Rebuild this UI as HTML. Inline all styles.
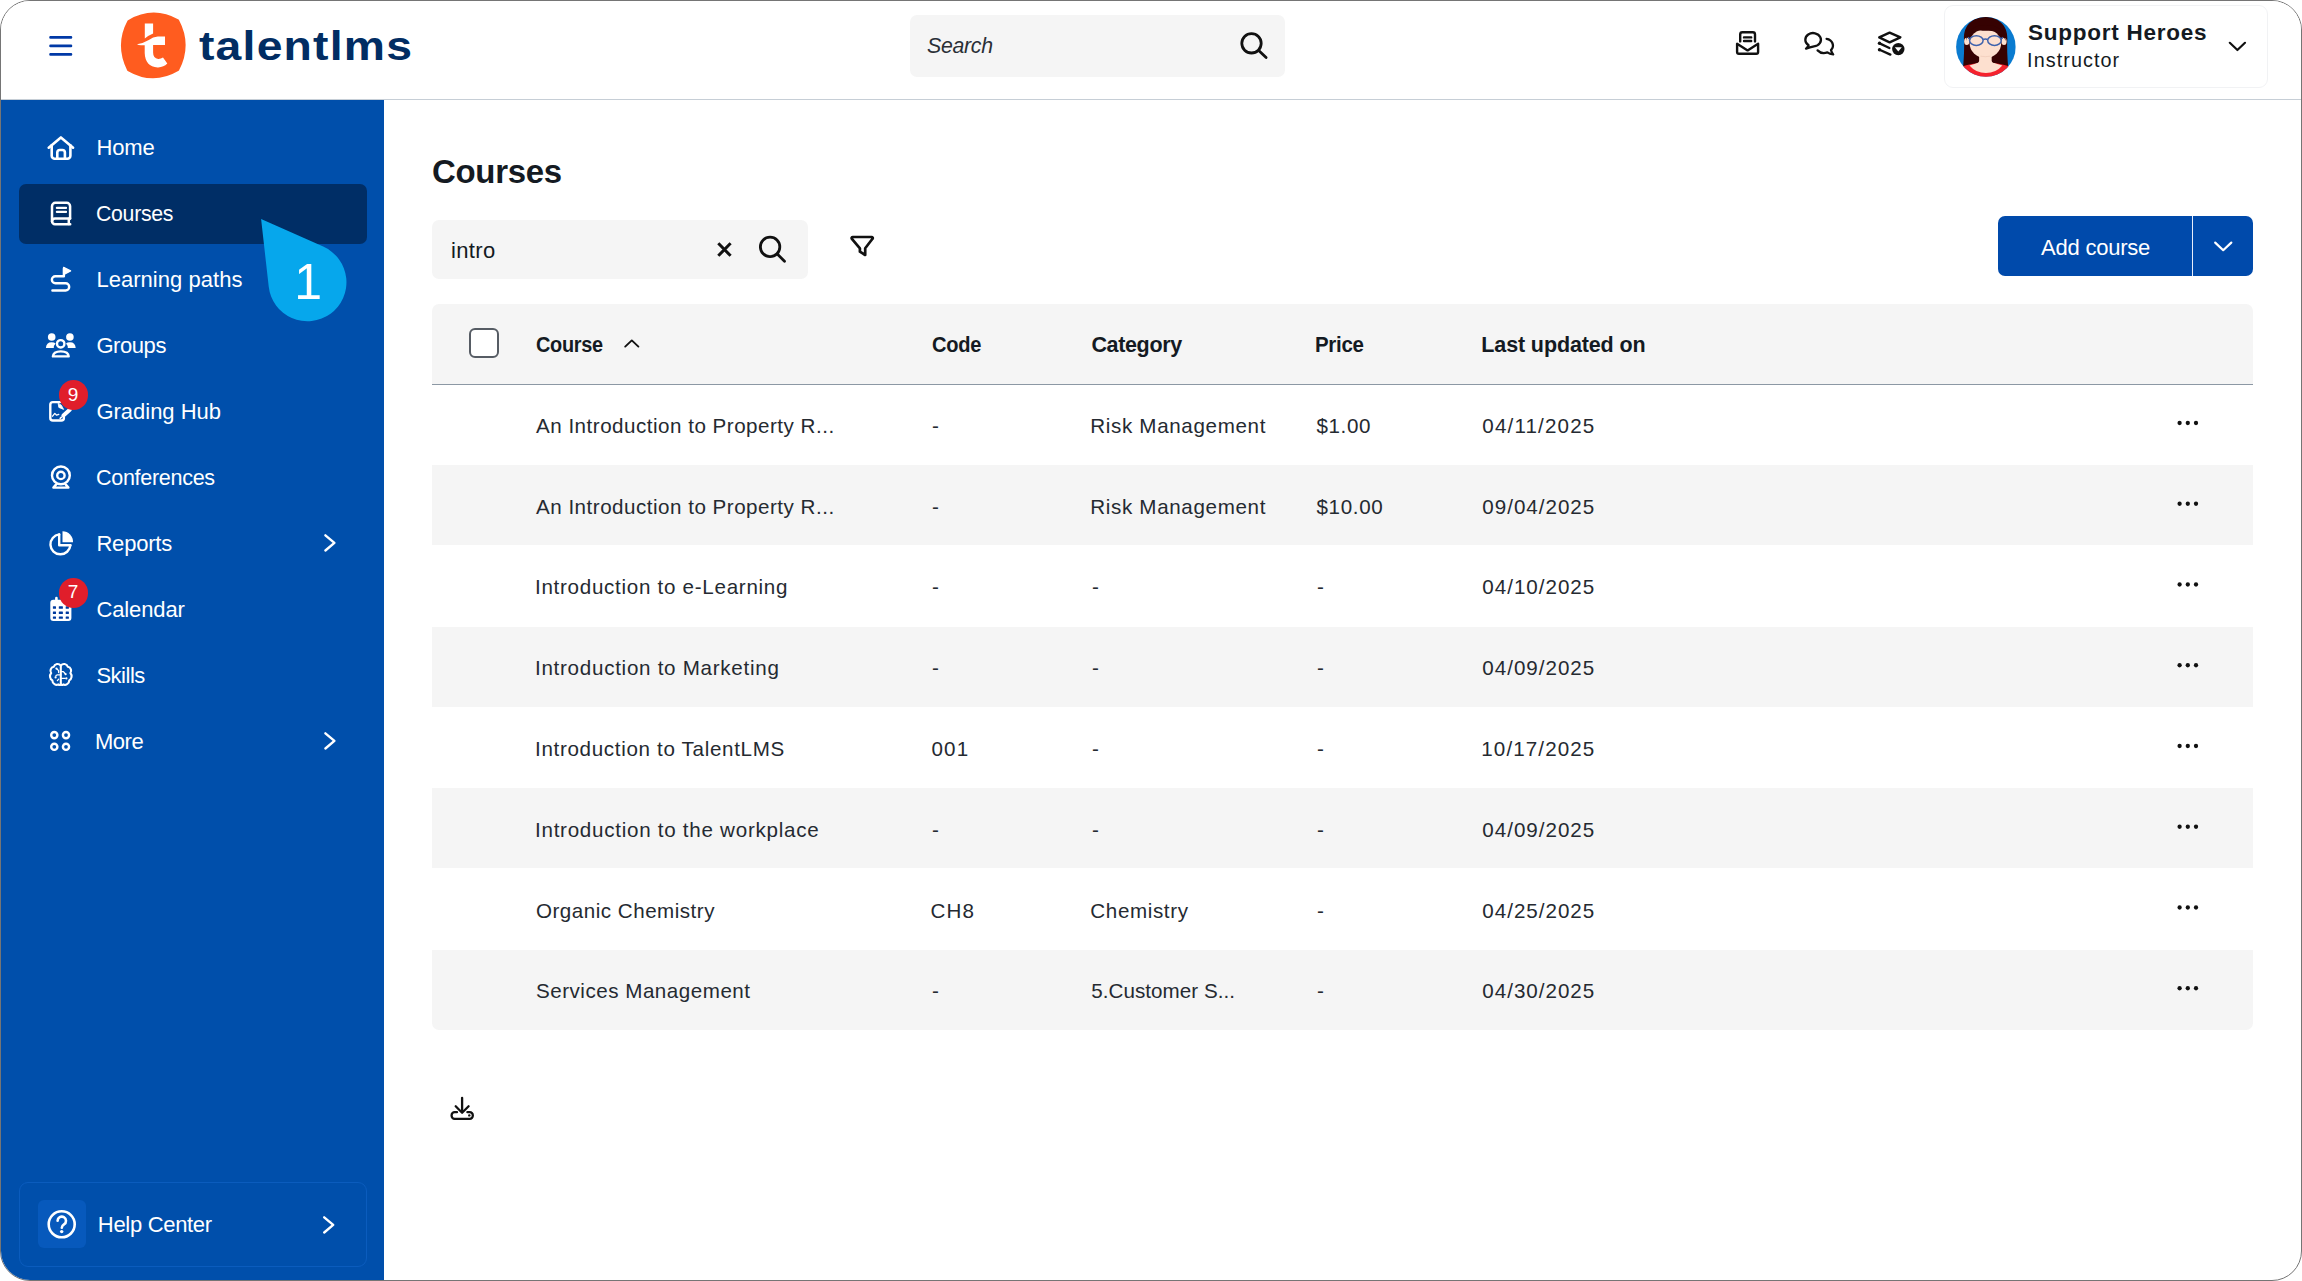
<!DOCTYPE html>
<html lang="en"><head><meta charset="utf-8"><title>Courses | TalentLMS</title>
<style>
html,body{margin:0;padding:0;background:#fff;}
body{width:2302px;height:1281px;overflow:hidden;position:relative;font-family:"Liberation Sans",sans-serif;color:#252a31;}
.frame{position:absolute;left:0;top:0;width:2300px;height:1279px;border:1px solid #757575;border-radius:30px;overflow:hidden;background:#fff;}
.page{position:absolute;left:-1px;top:-1px;width:2302px;height:1281px;}
.abs,.t,.i{position:absolute;}
.t{white-space:nowrap;line-height:1;color:#252a31;margin:0;padding:0;border:0;background:none;font-family:inherit;font-weight:400;text-decoration:none;display:block;}
.i{overflow:visible;}
header{position:absolute;left:0;top:0;width:2302px;height:99px;border-bottom:1px solid #c6ced6;background:#fff;}
nav{position:absolute;left:0;top:100px;width:384px;height:1181px;background:#004fab;}
.active{left:19px;top:184px;width:347.6px;height:59.6px;border-radius:7px;background:#002e66;}
.help{left:19px;top:1182px;width:345.6px;height:83.2px;border:1px solid #0b5cbd;border-radius:9px;}
.helpic{left:38px;top:1200.3px;width:47.8px;height:48px;border-radius:6px;background:#0759bc;}
.badge{width:29.6px;height:29.6px;border-radius:50%;background:#e01e2b;}
.hsearch{left:910.3px;top:15.1px;width:375px;height:62px;border-radius:7px;background:#f5f5f5;}
.user{left:1943.7px;top:4.7px;width:322.3px;height:81px;border:1px solid #f1f2f4;border-radius:9px;}
.tsearch{left:432.4px;top:219.6px;width:375.9px;height:59.9px;border-radius:7px;background:#f5f5f5;}
.btn{left:1997.8px;top:216px;width:255.2px;height:60px;border-radius:7px;background:#004aab;}
.btnsep{left:2191.6px;top:216px;width:1.6px;height:60px;background:#e8eefb;}
.thead{left:432.4px;top:303.6px;width:1820.6px;height:80.4px;border-radius:7px 7px 0 0;background:#f5f5f5;border-bottom:1.5px solid #8c98a4;}
.row{left:432.4px;width:1820.6px;height:80.2px;background:#f5f5f5;}
.cb{left:469.4px;top:328px;width:26px;height:26px;border:2px solid #565c64;border-radius:6px;background:#fff;}
</style></head>
<body>
<div class="frame"><div class="page">
<header></header><nav></nav>
<div class="abs active"></div><div class="abs help"></div><div class="abs helpic"></div>
<div class="abs hsearch"></div><div class="abs user"></div><div class="abs tsearch"></div>
<div class="abs btn"></div><div class="abs btnsep"></div><div class="abs thead"></div><div class="abs cb"></div>
<div class="abs row" style="top:465.25px"></div>
<div class="abs row" style="top:626.75px"></div>
<div class="abs row" style="top:788.25px"></div>
<div class="abs row" style="top:949.75px;border-radius:0 0 7px 7px"></div>
<svg class="i" style="left:44px;top:30px" width="34" height="32" viewBox="44 30 34 32" ><path d="M50.5,37.4H71M50.5,45.9H71M50.5,54.4H71" fill="none" stroke="#0039a6" stroke-width="2.6" stroke-linecap="round"/></svg>
<svg class="i" style="left:116px;top:8px" width="76" height="76" viewBox="116 8 76 76" ><path d="M127.6,20.2Q153.2,5.2 178.9,19.6Q192.4,45 179,70.6Q153.2,85.8 127.2,70.8Q114.2,45 127.6,20.2Z" fill="#ff5c1f" stroke="#ff5c1f" stroke-width="2.4" stroke-linejoin="round" transform="translate(153.25 45.45) scale(.962 .965) translate(-153.2 -45.4)"/>
<path d="M144.8,23.4H153.1V33.6Q148.5,35.6 144.8,38.4Z" fill="#fff"/>
<path d="M137,44.2Q143.5,43.4 148.8,40.1Q153,37 157.8,36.6H165V45.1H153.1V52.5Q153.1,58.4 158.2,58.9Q160.8,59 163,57.6L167.3,63.6Q163.5,67.6 157.6,67.4Q145.2,66.6 144.7,53V45.2H141Q138.5,45 137,44.2Z" fill="#fff"/></svg>
<svg class="i" style="left:44px;top:132px" width="34" height="32" viewBox="44 132 34 32" ><g fill="none" stroke="#fff" stroke-linecap="round" stroke-linejoin="round" stroke-width="2.6"><path d="M48.7,147.7L60.9,137.4L73.1,147.7"/><path d="M51.7,145.2V155.8a3,3 0 0 0 3,3H67.4a3,3 0 0 0 3,-3V145.2"/><path d="M57.3,158.6V152.6a2.6,2.6 0 0 1 2.6,-2.6h2.4a2.6,2.6 0 0 1 2.6,2.6V158.6"/></g></svg>
<svg class="i" style="left:46px;top:198px" width="30" height="32" viewBox="46 198 30 32" ><g fill="none" stroke="#fff" stroke-linecap="round" stroke-linejoin="round" stroke-width="2.5"><path d="M70.1,218.6V206.2a3.4,3.4 0 0 0 -3.4,-3.4H55.4a3.4,3.4 0 0 0 -3.4,3.4V221.6"/><path d="M70.1,218.6H54.9a2.8,2.8 0 0 0 0,5.6H70.2"/><path d="M68.8,218.8V224"/><path d="M56.9,207.9H66M56.9,211.9H66" stroke-width="2.3"/></g></svg>
<svg class="i" style="left:46px;top:262px" width="30" height="34" viewBox="46 262 30 34" ><g fill="none" stroke="#fff" stroke-linecap="round" stroke-linejoin="round" stroke-width="2.4"><path d="M63.9,268.5V276.2H55.4a3.55,3.55 0 0 0 0,7.1H65.6a3.6,3.6 0 0 1 0,7.2H52.4"/><path d="M63.6,267.4L70.6,270.9L64.4,274.2Z" fill="#fff" stroke-width="1.2"/></g></svg>
<svg class="i" style="left:42px;top:330px" width="38" height="30" viewBox="42 330 38 30" ><g fill="#fff"><circle cx="51.7" cy="337" r="3.8"/><circle cx="69.9" cy="337" r="3.8"/>
<path d="M45.9,347.9Q46.3,342.2 51.6,342.2Q54.4,342.2 55.6,343.4Q53.6,345.4 53.8,347.9Z"/>
<path d="M75.7,347.9Q75.3,342.2 70,342.2Q67.2,342.2 66,343.4Q68,345.4 67.8,347.9Z"/></g>
<g fill="none" stroke="#fff" stroke-width="2.4" stroke-linejoin="round"><circle cx="60.7" cy="343.8" r="3.7"/><path d="M52.9,356.4Q53.3,351.4 60.8,351.4Q68.3,351.4 68.7,356.4Z"/></g></svg>
<svg class="i" style="left:44px;top:396px" width="34" height="30" viewBox="44 396 34 30" ><g fill="none" stroke="#fff" stroke-linecap="round" stroke-linejoin="round" stroke-width="2.4"><path d="M63.9,417.4V417.9a2.6,2.6 0 0 1 -2.6,2.6H52.9a2.6,2.6 0 0 1 -2.6,-2.6V404.7a2.6,2.6 0 0 1 2.6,-2.6H60"/><path d="M58.2,403.5L58.8,407.4L63.6,409.4L61.5,405.5Z" fill="#fff" stroke-width=".8"/>
<path d="M69.8,409.8L63.4,415.4" stroke-width="4"/><path d="M61.5,417.2L60.2,418.4" stroke-width="1.6"/>
<path d="M52.6,416.2l2.2,-2.8 1.8,1.8 2.2,-.8" stroke-width="1.3"/></g></svg>
<svg class="i" style="left:46px;top:462px" width="30" height="30" viewBox="46 462 30 30" ><g fill="none" stroke="#fff" stroke-linecap="round" stroke-linejoin="round" stroke-width="2.4"><circle cx="60.9" cy="475.4" r="8.9"/><circle cx="60.9" cy="475.4" r="3.7"/><path d="M56,484.6L53.4,487.6H68.4L65.8,484.6"/></g></svg>
<svg class="i" style="left:44px;top:528px" width="34" height="32" viewBox="44 528 34 32" ><g fill="none" stroke="#fff" stroke-linecap="round" stroke-linejoin="round" stroke-width="2.4"><path d="M59.2,534.4A10,10 0 1 0 70.4,545.2"/><path d="M59.2,534.4V545.2H70.4"/></g><path d="M62.5,531.2A10.6,10.6 0 0 1 73,542.2H62.5Z" fill="#fff"/></svg>
<svg class="i" style="left:46px;top:594px" width="30" height="30" viewBox="46 594 30 30" ><path d="M53.3,599.8h15.1a3,3 0 0 1 3,3v15.1a3,3 0 0 1 -3,3H53.3a3,3 0 0 1 -3,-3V602.8a3,3 0 0 1 3,-3Z" fill="#fff"/><path d="M56.4,598V601" stroke="#fff" stroke-width="2.6" stroke-linecap="round"/><g fill="#003a9e"><rect x="52.9" y="606.3" width="3.1" height="2.4" rx=".5"/><rect x="52.9" y="611.5" width="3.1" height="2.4" rx=".5"/><rect x="52.9" y="616.6" width="3.1" height="2.1" rx=".5"/><rect x="58.8" y="606.3" width="4.1" height="2.4" rx=".5"/><rect x="58.8" y="611.5" width="4.1" height="2.4" rx=".5"/><rect x="58.8" y="616.6" width="4.1" height="2.1" rx=".5"/><rect x="65.7" y="606.3" width="3.2" height="2.4" rx=".5"/><rect x="65.7" y="611.5" width="3.2" height="2.4" rx=".5"/><rect x="65.7" y="616.6" width="3.2" height="2.1" rx=".5"/></g></svg>
<svg class="i" style="left:46px;top:660px" width="30" height="30" viewBox="46 660 30 30" ><g fill="none" stroke="#fff" stroke-linecap="round" stroke-linejoin="round" stroke-width="2.1"><path d="M60.8,665.6C58.8,663 54.6,663.6 53.8,666.8C50.6,667.4 49.6,670.8 51.2,673C49.2,675.4 49.8,679 52.4,680.4C52.4,683.8 56,685.8 58.4,684.4C59.4,685.4 60.4,685 60.8,684.2Z"/>
<path d="M60.8,665.6C62.8,663 67,663.6 67.8,666.8C71,667.4 72,670.8 70.4,673C72.4,675.4 71.8,679 69.2,680.4C69.2,683.8 65.6,685.8 63.2,684.4C62.2,685.4 61.2,685 60.8,684.2"/>
<g stroke-width="1.3"><path d="M60.8,674.8H57.4a1.8,1.8 0 0 0 -1.6,1.2M57,669l1.6,1.6v2M60.8,671.6h2.6l1.4,1.6M60.8,678.4h4.4M57.4,680.6l1.2,-1.4"/></g></g>
<g fill="#fff"><circle cx="56.4" cy="668.6" r="1.1"/><circle cx="55.6" cy="677.4" r="1.1"/><circle cx="65.6" cy="674.2" r="1.1"/><circle cx="66.4" cy="678.4" r="1.1"/></g></svg>
<svg class="i" style="left:46px;top:728px" width="28" height="26" viewBox="46 728 28 26" ><g fill="none" stroke="#fff" stroke-linecap="round" stroke-linejoin="round" stroke-width="2.4"><circle cx="54.3" cy="735.1" r="3.1"/><circle cx="66" cy="735.1" r="3.1"/><circle cx="54.3" cy="746.8" r="3.1"/><circle cx="66" cy="746.8" r="3.1"/></g></svg>
<svg class="i" style="left:318px;top:531px" width="22" height="24" viewBox="318 531 22 24" ><path d="M325.4,535.3L334.4,542.9L325.4,550.5" fill="none" stroke="#fff" stroke-linecap="round" stroke-linejoin="round" stroke-width="2.4"/></svg>
<svg class="i" style="left:318px;top:729px" width="22" height="24" viewBox="318 729 22 24" ><path d="M325.4,733.3L334.4,740.9L325.4,748.5" fill="none" stroke="#fff" stroke-linecap="round" stroke-linejoin="round" stroke-width="2.4"/></svg>
<svg class="i" style="left:318px;top:1213px" width="22" height="24" viewBox="318 1213 22 24" ><path d="M324.2,1217.3L333.2,1224.9L324.2,1232.5" fill="none" stroke="#fff" stroke-linecap="round" stroke-linejoin="round" stroke-width="2.4"/></svg>
<svg class="i" style="left:44px;top:1206px" width="36" height="36" viewBox="44 1206 36 36" ><g fill="none" stroke="#fff" stroke-linecap="round" stroke-linejoin="round" stroke-width="2.6"><circle cx="61.7" cy="1224.3" r="13"/><path d="M57.6,1220.8a4.2,4.2 0 1 1 6.4,3.6c-1.6,1 -2.2,1.8 -2.2,3.4"/></g><circle cx="61.7" cy="1231.6" r="1.7" fill="#fff"/></svg>
<svg class="i" style="left:1236px;top:28px" width="36" height="36" viewBox="1236 28 36 36" ><g fill="none" stroke="#111" stroke-linecap="round" stroke-linejoin="round" stroke-width="2.8"><circle cx="1251.5" cy="43.3" r="9.7"/><path d="M1258.7,50.5L1266.1,57.6"/></g></svg>
<svg class="i" style="left:1730px;top:28px" width="34" height="30" viewBox="1730 28 34 30" ><g fill="none" stroke="#111" stroke-linecap="round" stroke-linejoin="round" stroke-width="2.4"><path d="M1737.1,43.8V52a1.8,1.8 0 0 0 1.8,1.8h17.4a1.8,1.8 0 0 0 1.8,-1.8V43.8L1747.6,50.4Z"/><path d="M1740.2,41.4V34.4a2.2,2.2 0 0 1 2.2,-2.2h10.4a2.2,2.2 0 0 1 2.2,2.2V41.4"/><path d="M1744,37.4h7.2M1744,41h7.2"/></g></svg>
<svg class="i" style="left:1800px;top:28px" width="40" height="30" viewBox="1800 28 40 30" ><g fill="none" stroke="#111" stroke-linecap="round" stroke-linejoin="round" stroke-width="2.3"><path d="M1808.6,45.2A7.8,6.7 0 1 1 1814,46.4Q1809.8,47.2 1806,48.6Q1808,47.2 1808.6,45.2Z"/><path d="M1826.6,38.8A7.6,6.8 0 0 1 1831,50Q1831.6,52.6 1833.2,54.4Q1829.6,54 1827.4,52.4A8.4,7.2 0 0 1 1817.6,50.4"/></g></svg>
<svg class="i" style="left:1874px;top:28px" width="36" height="30" viewBox="1874 28 36 30" ><g fill="none" stroke="#111" stroke-linecap="round" stroke-linejoin="round" stroke-width="2.3"><path d="M1879.2,37.4L1889.6,32.6L1900.4,37.4L1889.6,42.4Z"/><path d="M1879.6,43.4L1889.4,48M1879.6,49.8L1890.4,54.6"/></g><circle cx="1879.5" cy="43.3" r="1.7" fill="#111"/><circle cx="1879.5" cy="49.7" r="1.7" fill="#111"/><circle cx="1898.3" cy="49.1" r="6.2" fill="#111"/><path d="M1894.8,47.3h7l-3.5,4.2Z" fill="#fff"/></svg>
<svg class="i" style="left:2224px;top:36px" width="28" height="20" viewBox="2224 36 28 20" ><path d="M2229.8,42.8L2237.4,50L2245,42.8" fill="none" stroke="#111" stroke-linecap="round" stroke-linejoin="round" stroke-width="2.2"/></svg>
<svg class="i" style="left:1956.1px;top:17px" width="59.8" height="59.8" viewBox="0 0 60 60"><defs><clipPath id="avc"><circle cx="30" cy="30" r="29.9"/></clipPath></defs>
<g clip-path="url(#avc)"><rect width="60" height="60" fill="#0a7bd0"/>
<path d="M7.2,49.5C8,40 8.5,30 8,22C7.5,8 17,0 29.5,0C42,0 52,8 51.5,22C51,30 51.5,40 52.3,49.5Z" fill="#360202"/>
<path d="M5,50Q30,42 55,50V62H5Z" fill="#f5222d"/>
<path d="M13.5,48.6Q30,42 46.5,48.6Q40,56.2 30,56.2Q20,56.2 13.5,48.6Z" fill="#fde0cf"/>
<path d="M23.2,33H35.8V44Q36,46.5 41,47.5L30,51L18.5,47.5Q23,46.5 23.2,44Z" fill="#fde0cf"/>
<ellipse cx="29.5" cy="26.6" rx="15.8" ry="14.4" fill="#fde0cf"/>
<ellipse cx="10.8" cy="24.5" rx="2.6" ry="3.6" fill="#fde0cf"/><ellipse cx="48.2" cy="24.5" rx="2.6" ry="3.6" fill="#fde0cf"/>
<path d="M10,24C11,12 20,8 30,8C40,8 49,12 50,24C47,17 40,13.5 32,13.8C27,14 24,13.2 21,13.8C16,15 12,18 10,24Z" fill="#360202"/>
<path d="M24.5,39.3Q29.5,40.3 34.5,39.3" stroke="#f0cdbb" stroke-width=".8" fill="none"/>
<g fill="none" stroke="#3f63ad" stroke-width="1.5"><ellipse cx="20.4" cy="23.6" rx="6.8" ry="4.9"/><ellipse cx="38.6" cy="23.6" rx="6.8" ry="4.9"/><path d="M27.2,22.6Q29.5,21.6 31.8,22.6M13.6,22L12,20.4M45.4,22L47,20.4"/></g></g></svg>
<svg class="i" style="left:710px;top:234px" width="30" height="30" viewBox="710 234 30 30" ><path d="M718.3,243.3L730.6,255.8M730.6,243.3L718.3,255.8" fill="none" stroke="#111" stroke-width="3"/></svg>
<svg class="i" style="left:754px;top:232px" width="36" height="36" viewBox="754 232 36 36" ><g fill="none" stroke="#111" stroke-linecap="round" stroke-linejoin="round" stroke-width="2.8"><circle cx="770.1" cy="246.9" r="9.7"/><path d="M777.3,254.1L784.5,261.2"/></g></svg>
<svg class="i" style="left:846px;top:230px" width="34" height="32" viewBox="846 230 34 32" ><path d="M852.8,237H871.6a1.1,1.1 0 0 1 .9,1.8L865.2,248.3V255L859.9,251.7V248.3L851.9,238.8a1.1,1.1 0 0 1 .9,-1.8Z" fill="none" stroke="#111" stroke-linecap="round" stroke-linejoin="round" stroke-width="2.7"/></svg>
<svg class="i" style="left:620px;top:334px" width="24" height="18" viewBox="620 334 24 18" ><path d="M625.2,346.6L631.8,340.4L638.4,346.6" fill="none" stroke="#111" stroke-linecap="round" stroke-linejoin="round" stroke-width="1.9"/></svg>
<svg class="i" style="left:2208px;top:236px" width="30" height="20" viewBox="2208 236 30 20" ><path d="M2215.2,242.6L2223.2,250.2L2231.3,242.6" fill="none" stroke="#fff" stroke-linecap="round" stroke-linejoin="round" stroke-width="2.2"/></svg>
<svg class="i" style="left:2170px;top:410px" width="36" height="600" viewBox="2170 410 36 600" ><g fill="#111"><circle cx="2179.6" cy="423" r="2.15"/><circle cx="2187.8" cy="423" r="2.15"/><circle cx="2196" cy="423" r="2.15"/><circle cx="2179.6" cy="503.75" r="2.15"/><circle cx="2187.8" cy="503.75" r="2.15"/><circle cx="2196" cy="503.75" r="2.15"/><circle cx="2179.6" cy="584.5" r="2.15"/><circle cx="2187.8" cy="584.5" r="2.15"/><circle cx="2196" cy="584.5" r="2.15"/><circle cx="2179.6" cy="665.25" r="2.15"/><circle cx="2187.8" cy="665.25" r="2.15"/><circle cx="2196" cy="665.25" r="2.15"/><circle cx="2179.6" cy="746" r="2.15"/><circle cx="2187.8" cy="746" r="2.15"/><circle cx="2196" cy="746" r="2.15"/><circle cx="2179.6" cy="826.75" r="2.15"/><circle cx="2187.8" cy="826.75" r="2.15"/><circle cx="2196" cy="826.75" r="2.15"/><circle cx="2179.6" cy="907.5" r="2.15"/><circle cx="2187.8" cy="907.5" r="2.15"/><circle cx="2196" cy="907.5" r="2.15"/><circle cx="2179.6" cy="988.25" r="2.15"/><circle cx="2187.8" cy="988.25" r="2.15"/><circle cx="2196" cy="988.25" r="2.15"/></g></svg>
<svg class="i" style="left:446px;top:1092px" width="32" height="32" viewBox="446 1092 32 32" ><g fill="none" stroke="#111" stroke-linecap="round" stroke-linejoin="round" stroke-width="2.3"><path d="M462.1,1097.8V1112.5M455.7,1106.3L462.1,1112.7L468.6,1106.3"/><path d="M457,1112.2H454.6a3,3 0 0 0 -3,3v0.6a3,3 0 0 0 3,3H469.8a3,3 0 0 0 3,-3v-0.6a3,3 0 0 0 -3,-3H467.4"/></g><circle cx="469.3" cy="1115.4" r="1.2" fill="#111"/></svg>
<svg class="i" style="left:256px;top:214px" width="96" height="112" viewBox="256 214 96 112" ><path d="M261.1,219.1L323.2,246.6A39,39 0 1 1 268.7,286.6Z" fill="#06a7ec"/></svg>
<div class="abs badge" style="left:58.8px;top:380.3px"></div><div class="abs badge" style="left:58.8px;top:578px"></div>
<div class="hd">
<span class="t" style="left:199.00px;top:26.00px;font-size:41px;letter-spacing:1.052px;font-weight:700;color:#012d63;transform:scaleX(1.13);transform-origin:0 0;">talentlms</span>
<span class="t" style="left:927.20px;top:35.00px;font-size:22px;letter-spacing:-0.300px;color:#2a2f36;font-style:italic;transform:scaleX(0.9681);transform-origin:0 0;">Search</span>
<span class="t" style="left:2028.10px;top:22.00px;font-size:22.5px;letter-spacing:0.749px;font-weight:700;color:#141a22;">Support Heroes</span>
<span class="t" style="left:2027.10px;top:51.00px;font-size:19.8px;letter-spacing:1.071px;color:#141a22;">Instructor</span>
</div>
<div class="sb">
<a class="t" style="left:96.40px;top:137.00px;font-size:22px;letter-spacing:-0.083px;color:#ffffff;">Home</a>
<a class="t" style="left:96.43px;top:203.00px;font-size:22px;letter-spacing:-0.300px;color:#ffffff;transform:scaleX(0.9669);transform-origin:0 0;">Courses</a>
<a class="t" style="left:96.40px;top:269.00px;font-size:22px;letter-spacing:0.042px;color:#ffffff;">Learning paths</a>
<a class="t" style="left:96.40px;top:335.00px;font-size:22px;letter-spacing:-0.429px;color:#ffffff;">Groups</a>
<a class="t" style="left:96.40px;top:401.00px;font-size:22px;letter-spacing:-0.010px;color:#ffffff;">Grading Hub</a>
<a class="t" style="left:96.42px;top:467.00px;font-size:22px;letter-spacing:-0.300px;color:#ffffff;transform:scaleX(0.9781);transform-origin:0 0;">Conferences</a>
<a class="t" style="left:96.40px;top:533.00px;font-size:22px;letter-spacing:-0.189px;color:#ffffff;">Reports</a>
<a class="t" style="left:96.40px;top:599.00px;font-size:22px;letter-spacing:-0.107px;color:#ffffff;">Calendar</a>
<a class="t" style="left:96.40px;top:665.00px;font-size:22px;letter-spacing:-0.487px;color:#ffffff;">Skills</a>
<a class="t" style="left:94.90px;top:731.00px;font-size:22px;letter-spacing:-0.463px;color:#ffffff;">More</a>
<span class="t" style="left:67.85px;top:385.00px;font-size:19px;color:#ffffff;">9</span>
<span class="t" style="left:67.80px;top:582.00px;font-size:19px;color:#ffffff;">7</span>
<a class="t" style="left:97.80px;top:1214.00px;font-size:22px;letter-spacing:-0.306px;color:#ffffff;">Help Center</a>
</div>
<main>
<h1 class="t" style="left:432.32px;top:155.00px;font-size:33.5px;letter-spacing:-0.300px;font-weight:700;color:#141a22;transform:scaleX(0.9838);transform-origin:0 0;">Courses</h1>
<span class="t" style="left:451.00px;top:240.00px;font-size:22px;letter-spacing:0.360px;color:#141a22;">intro</span>
<button class="t" style="left:2041.00px;top:237.00px;font-size:22px;letter-spacing:-0.217px;color:#ffffff;">Add course</button>
<span class="t" style="left:294.30px;top:257.00px;font-size:50px;color:#ffffff;">1</span>
<div class="table"><div class="tr th">
<span class="t" style="left:536.40px;top:335.00px;font-size:21.5px;letter-spacing:-0.300px;font-weight:700;color:#141a22;transform:scaleX(0.9254);transform-origin:0 0;">Course</span>
<span class="t" style="left:931.60px;top:335.00px;font-size:21.5px;letter-spacing:-0.300px;font-weight:700;color:#141a22;transform:scaleX(0.934);transform-origin:0 0;">Code</span>
<span class="t" style="left:1091.40px;top:335.00px;font-size:21.5px;letter-spacing:-0.348px;font-weight:700;color:#141a22;">Category</span>
<span class="t" style="left:1315.45px;top:335.00px;font-size:21.5px;letter-spacing:-0.300px;font-weight:700;color:#141a22;transform:scaleX(0.9517);transform-origin:0 0;">Price</span>
<span class="t" style="left:1481.30px;top:335.00px;font-size:21.5px;letter-spacing:-0.121px;font-weight:700;color:#141a22;">Last updated on</span>
</div>
<div class="tr">
<span class="t" style="left:536.00px;top:416.00px;font-size:20.6px;letter-spacing:0.496px;">An Introduction to Property R...</span>
<span class="t" style="left:932.00px;top:416.00px;font-size:20.6px;">-</span>
<span class="t" style="left:1090.30px;top:416.00px;font-size:20.6px;letter-spacing:0.654px;">Risk Management</span>
<span class="t" style="left:1316.40px;top:416.00px;font-size:20.6px;letter-spacing:0.630px;">$1.00</span>
<span class="t" style="left:1482.30px;top:416.00px;font-size:20.6px;letter-spacing:1.157px;">04/11/2025</span>
</div>
<div class="tr">
<span class="t" style="left:536.00px;top:497.00px;font-size:20.6px;letter-spacing:0.496px;">An Introduction to Property R...</span>
<span class="t" style="left:932.00px;top:497.00px;font-size:20.6px;">-</span>
<span class="t" style="left:1090.30px;top:497.00px;font-size:20.6px;letter-spacing:0.654px;">Risk Management</span>
<span class="t" style="left:1316.40px;top:497.00px;font-size:20.6px;letter-spacing:0.673px;">$10.00</span>
<span class="t" style="left:1482.30px;top:497.00px;font-size:20.6px;letter-spacing:0.987px;">09/04/2025</span>
</div>
<div class="tr">
<span class="t" style="left:535.00px;top:577.00px;font-size:20.6px;letter-spacing:0.710px;">Introduction to e-Learning</span>
<span class="t" style="left:932.00px;top:577.00px;font-size:20.6px;">-</span>
<span class="t" style="left:1092.00px;top:577.00px;font-size:20.6px;">-</span>
<span class="t" style="left:1317.00px;top:577.00px;font-size:20.6px;">-</span>
<span class="t" style="left:1482.30px;top:577.00px;font-size:20.6px;letter-spacing:0.987px;">04/10/2025</span>
</div>
<div class="tr">
<span class="t" style="left:535.00px;top:658.00px;font-size:20.6px;letter-spacing:0.717px;">Introduction to Marketing</span>
<span class="t" style="left:932.00px;top:658.00px;font-size:20.6px;">-</span>
<span class="t" style="left:1092.00px;top:658.00px;font-size:20.6px;">-</span>
<span class="t" style="left:1317.00px;top:658.00px;font-size:20.6px;">-</span>
<span class="t" style="left:1482.30px;top:658.00px;font-size:20.6px;letter-spacing:0.987px;">04/09/2025</span>
</div>
<div class="tr">
<span class="t" style="left:535.00px;top:739.00px;font-size:20.6px;letter-spacing:0.671px;">Introduction to TalentLMS</span>
<span class="t" style="left:931.50px;top:739.00px;font-size:20.6px;letter-spacing:1.147px;">001</span>
<span class="t" style="left:1092.00px;top:739.00px;font-size:20.6px;">-</span>
<span class="t" style="left:1317.00px;top:739.00px;font-size:20.6px;">-</span>
<span class="t" style="left:1481.30px;top:739.00px;font-size:20.6px;letter-spacing:1.098px;">10/17/2025</span>
</div>
<div class="tr">
<span class="t" style="left:535.00px;top:820.00px;font-size:20.6px;letter-spacing:0.727px;">Introduction to the workplace</span>
<span class="t" style="left:932.00px;top:820.00px;font-size:20.6px;">-</span>
<span class="t" style="left:1092.00px;top:820.00px;font-size:20.6px;">-</span>
<span class="t" style="left:1317.00px;top:820.00px;font-size:20.6px;">-</span>
<span class="t" style="left:1482.30px;top:820.00px;font-size:20.6px;letter-spacing:0.987px;">04/09/2025</span>
</div>
<div class="tr">
<span class="t" style="left:536.00px;top:901.00px;font-size:20.6px;letter-spacing:0.499px;">Organic Chemistry</span>
<span class="t" style="left:930.50px;top:901.00px;font-size:20.6px;letter-spacing:1.178px;">CH8</span>
<span class="t" style="left:1090.30px;top:901.00px;font-size:20.6px;letter-spacing:0.627px;">Chemistry</span>
<span class="t" style="left:1317.00px;top:901.00px;font-size:20.6px;">-</span>
<span class="t" style="left:1482.30px;top:901.00px;font-size:20.6px;letter-spacing:0.987px;">04/25/2025</span>
</div>
<div class="tr">
<span class="t" style="left:536.00px;top:981.00px;font-size:20.6px;letter-spacing:0.507px;">Services Management</span>
<span class="t" style="left:932.00px;top:981.00px;font-size:20.6px;">-</span>
<span class="t" style="left:1091.30px;top:981.00px;font-size:20.6px;letter-spacing:0.040px;">5.Customer S...</span>
<span class="t" style="left:1317.00px;top:981.00px;font-size:20.6px;">-</span>
<span class="t" style="left:1482.30px;top:981.00px;font-size:20.6px;letter-spacing:0.987px;">04/30/2025</span>
</div>
</div></main>
</div></div>
</body></html>
